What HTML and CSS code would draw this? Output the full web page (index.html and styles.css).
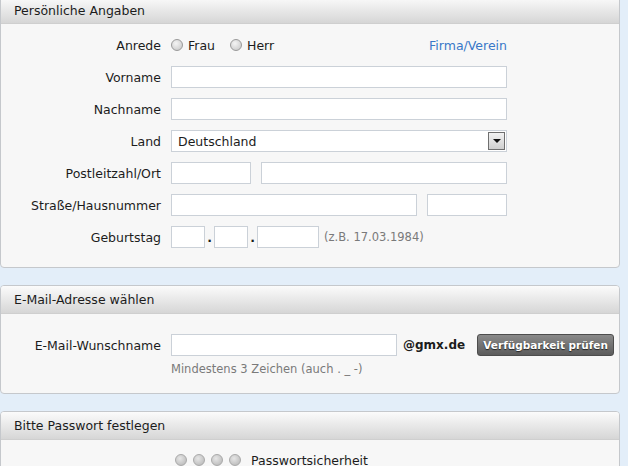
FILE: index.html
```html
<!DOCTYPE html>
<html lang="de">
  <head>
    <meta charset="UTF-8" />
    <title>Registrierung</title>
    <link rel="stylesheet" href="styles.css">
  </head>
  <body>
    <div class="page">
      <div class="panel first">
        <div class="panel-head">Persönliche Angaben</div>
        <div class="panel-body">
          <div class="row">
            <label class="lbl">Anrede</label>
            <div class="field anrede">
              <span class="radio"></span><span class="opt">Frau</span>
              <span class="radio"></span><span class="opt">Herr</span>
              <a class="link" href="#">Firma/Verein</a>
            </div>
          </div>
          <div class="row">
            <label class="lbl">Vorname</label>
            <div class="field"><input class="inp full" type="text"></div>
          </div>
          <div class="row">
            <label class="lbl">Nachname</label>
            <div class="field"><input class="inp full" type="text"></div>
          </div>
          <div class="row">
            <label class="lbl">Land</label>
            <div class="field">
              <div class="select">
                <span>Deutschland</span>
                <span class="arrow"></span>
              </div>
            </div>
          </div>
          <div class="row">
            <label class="lbl">Postleitzahl/Ort</label>
            <div class="field split">
              <input class="inp short" type="text">
              <input class="inp long" type="text">
            </div>
          </div>
          <div class="row">
            <label class="lbl">Straße/Hausnummer</label>
            <div class="field split">
              <input class="inp long" type="text">
              <input class="inp short" type="text">
            </div>
          </div>
          <div class="row">
            <label class="lbl">Geburtstag</label>
            <div class="field date">
              <input class="inp dd" type="text"><span class="dot">.</span>
              <input class="inp dd" type="text"><span class="dot">.</span>
              <input class="inp yyyy" type="text">
              <span class="hint">(z.B. 17.03.1984)</span>
            </div>
          </div>
        </div>
      </div>

      <div class="panel">
        <div class="panel-head">E-Mail-Adresse wählen</div>
        <div class="panel-body mail">
          <div class="row">
            <label class="lbl">E-Mail-Wunschname</label>
            <div class="field">
              <input class="inp wish" type="text">
              <span class="domain">@gmx.de</span>
              <button class="check">Verfügbarkeit prüfen</button>
            </div>
          </div>
          <div class="row note">
            <span></span>
            <span class="hint">Mindestens 3 Zeichen (auch . _ -)</span>
          </div>
        </div>
      </div>

      <div class="panel">
        <div class="panel-head">Bitte Passwort festlegen</div>
        <div class="panel-body pw">
          <div class="row">
            <span></span>
            <div class="field">
              <span class="ball"></span><span class="ball"></span><span class="ball"></span><span class="ball"></span>
              <span class="strength">Passwortsicherheit</span>
            </div>
          </div>
        </div>
      </div>
    </div>
  </body>
</html>
```

FILE: styles.css
```css
* {
  margin: 0;
  padding: 0;
  box-sizing: border-box;
}

body {
  background-color: #e3eef9;
  font-family: "DejaVu Sans", Verdana, sans-serif;
  font-size: 12.5px;
  color: #1c1c1c;
  overflow: hidden;
}

.page {
  width: 620px;
}

.panel {
  border: 1px solid #c5c8cc;
  border-radius: 4px;
  background-color: #f7f7f7;
  margin-bottom: 17px;
  overflow: hidden;
}

.panel.first {
  margin-top: -4px;
}

.panel-head {
  height: 28px;
  line-height: 27px;
  padding-left: 13px;
  background: linear-gradient(#fbfbfb, #d6d6d6);
  border-bottom: 1px solid #cfcfcf;
}

.first .panel-head {
  height: 27px;
}

.panel-body {
  padding: 5px 0 14px;
}

.row {
  display: grid;
  grid-template-columns: 160px 1fr;
  column-gap: 10px;
  align-items: center;
  height: 32px;
}

.lbl {
  text-align: right;
}

.field {
  display: flex;
  align-items: center;
}

.inp {
  height: 22px;
  border: 1px solid #cbd1d8;
  background: #fff;
  font: inherit;
}

.full {
  width: 336px;
}

.split {
  gap: 10px;
}

.short {
  width: 80px;
}

.long {
  width: 246px;
}

.anrede {
  width: 336px;
}

.radio {
  width: 12px;
  height: 12px;
  border-radius: 50%;
  border: 1px solid #9a9a9a;
  background: radial-gradient(circle at 40% 35%, #f4f4f4, #c4c4c4);
  margin-right: 5px;
}

.opt {
  margin-right: 15px;
}

.link {
  margin-left: auto;
  color: #3878c8;
  text-decoration: none;
}

.select {
  width: 336px;
  height: 22px;
  border: 1px solid #cbd1d8;
  background: #fff;
  display: flex;
  align-items: center;
  justify-content: space-between;
  padding-left: 6px;
}

.arrow {
  width: 17px;
  height: 18px;
  margin-right: 1px;
  border: 1px solid #6f6f6f;
  background: linear-gradient(#f2f2f2, #cfcfcf);
  position: relative;
}

.arrow::after {
  content: "";
  position: absolute;
  left: 4px;
  top: 6px;
  border-left: 4px solid transparent;
  border-right: 4px solid transparent;
  border-top: 4px solid #111;
}

.dd {
  width: 34px;
}

.yyyy {
  width: 62px;
}

.dot {
  width: 9px;
  text-align: center;
  font-weight: bold;
}

.hint {
  color: #7a7a7a;
  font-size: 11.5px;
}

.date .hint {
  margin-left: 5px;
}

.mail {
  padding: 15px 0 16px;
}

.note {
  height: 16px;
}

.wish {
  width: 226px;
}

.domain {
  font-weight: bold;
  margin-left: 6px;
  font-size: 12px;
}

.check {
  margin-left: 12px;
  height: 22px;
  width: 137px;
  border: 1px solid #4d4d4d;
  border-radius: 3px;
  background: linear-gradient(#8a8a8a, #5c5c5c);
  color: #fff;
  font-family: inherit;
  font-size: 10.5px;
  font-weight: bold;
  text-shadow: 0 1px 1px #222;
}

.pw {
  padding-top: 4px;
}

.pw .field {
  padding-left: 4px;
}

.ball {
  width: 12px;
  height: 12px;
  border-radius: 50%;
  border: 1px solid #a9a9a9;
  background: radial-gradient(circle at 40% 35%, #e6e6e6, #b3b3b3);
  margin-right: 6px;
}

.strength {
  margin-left: 4px;
}
```
